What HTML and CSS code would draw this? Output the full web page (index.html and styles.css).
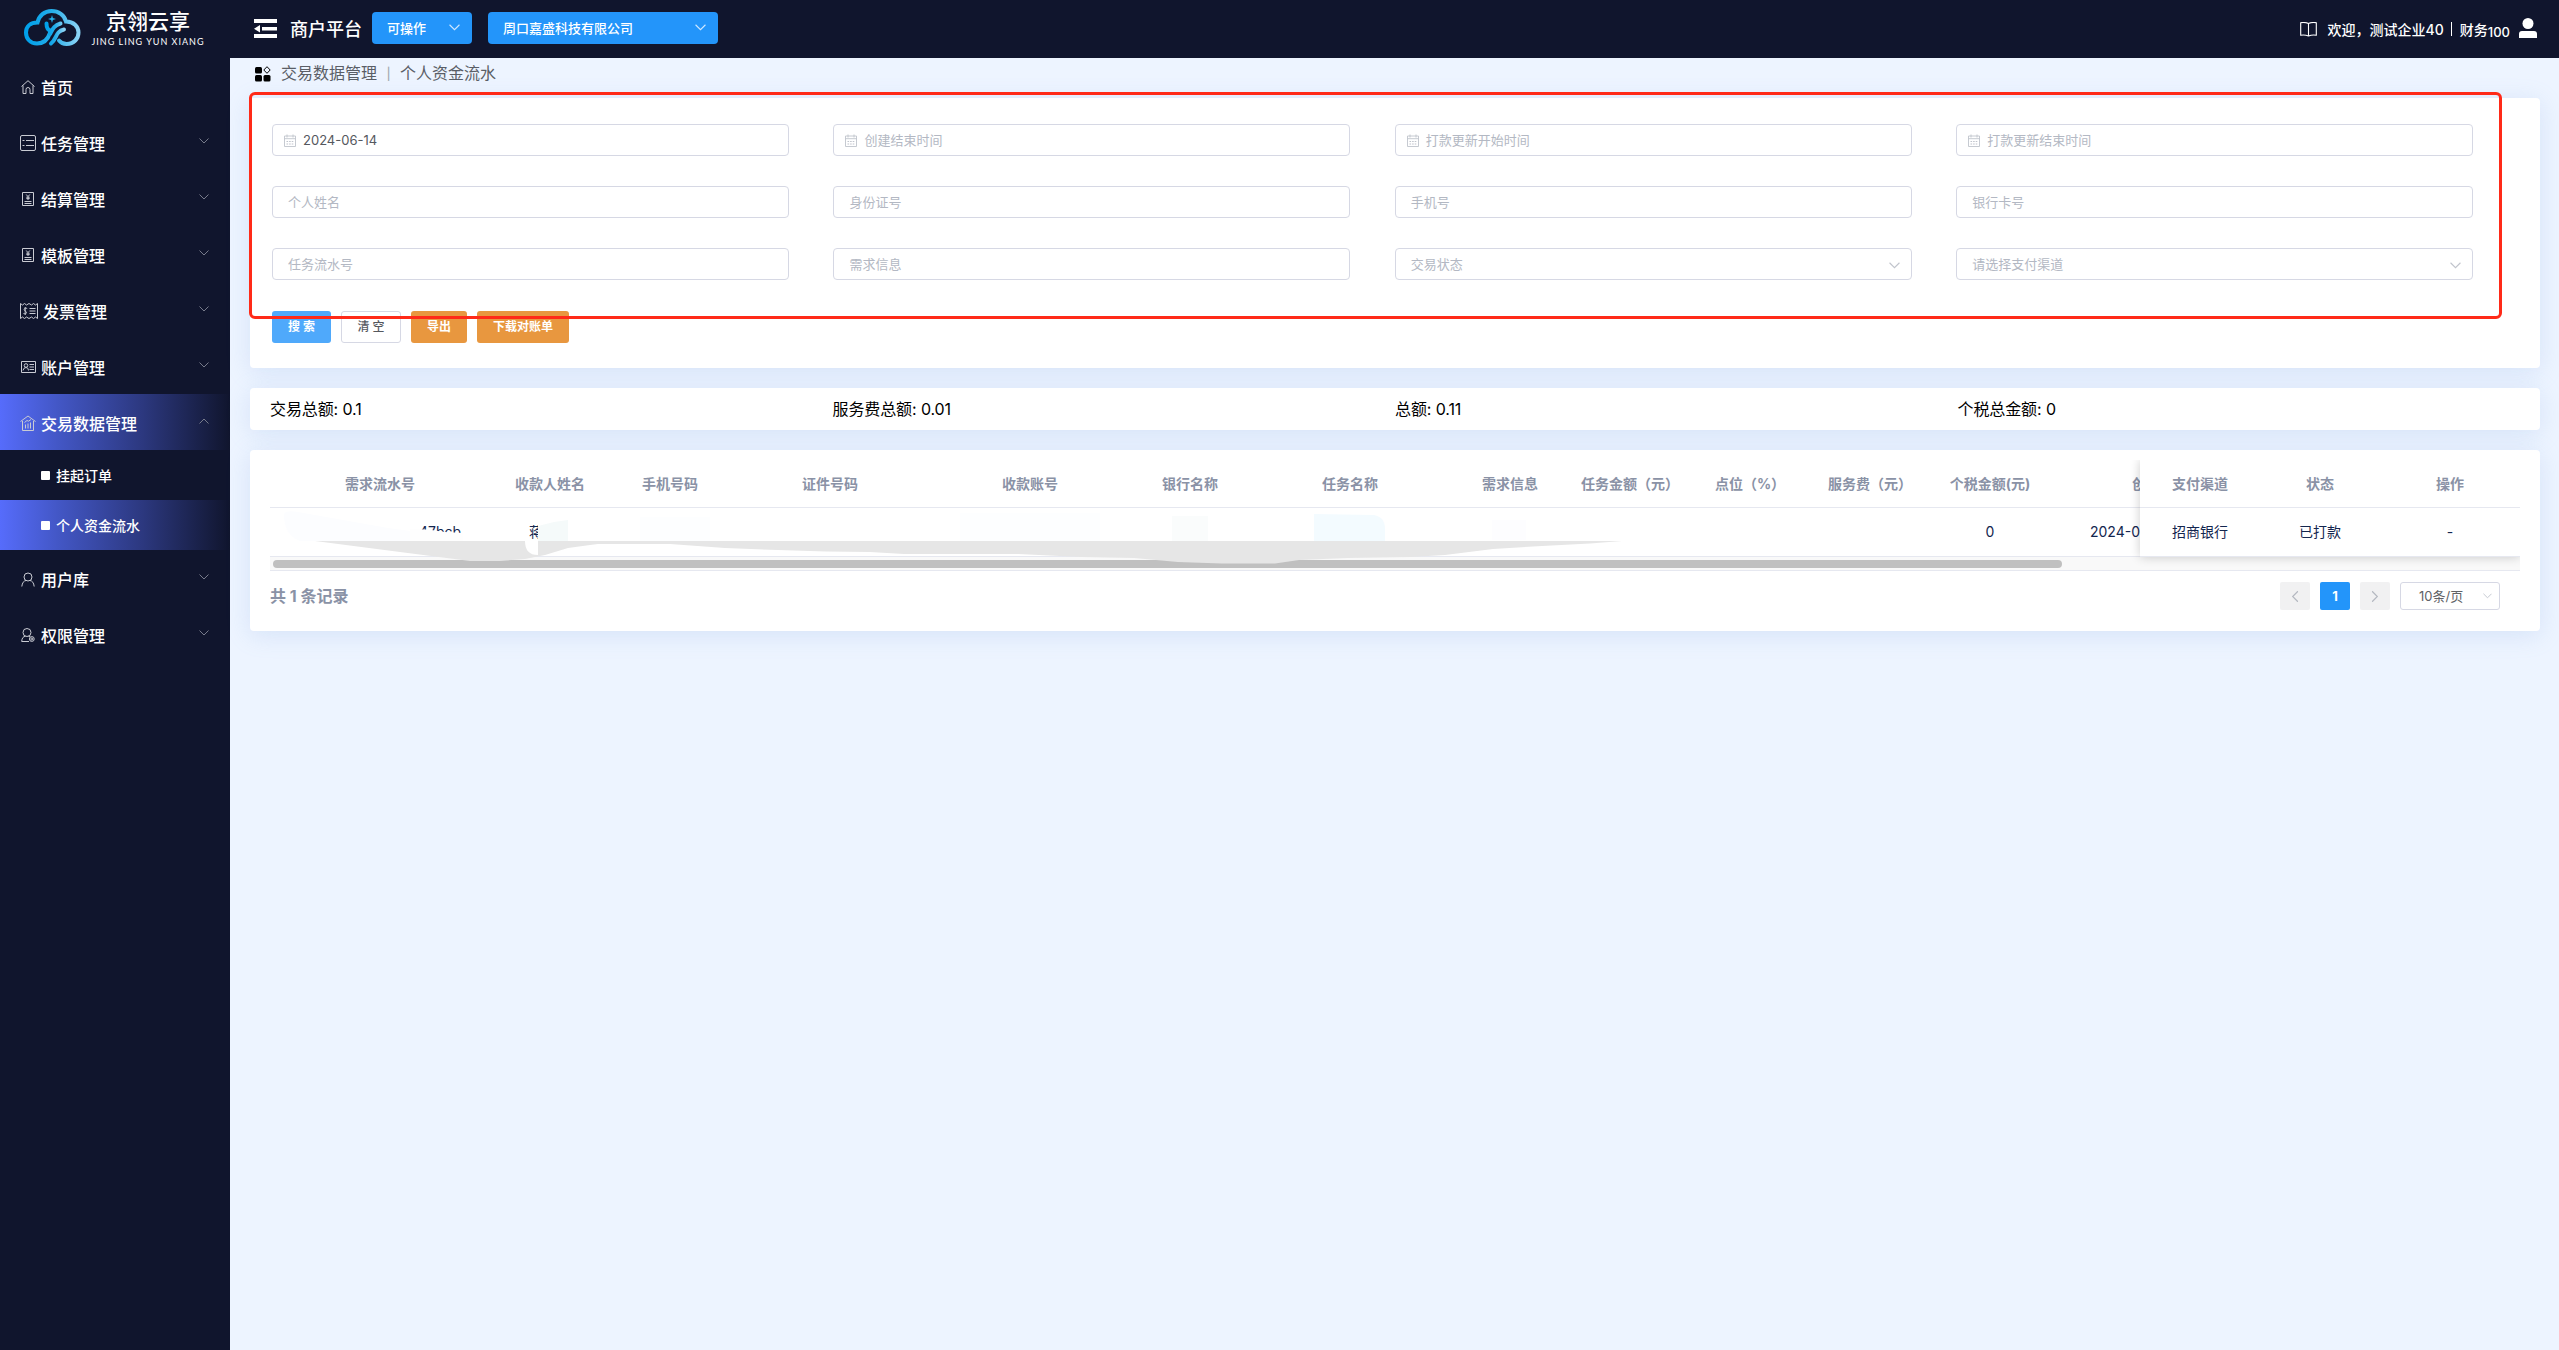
FILE: index.html
```
<!DOCTYPE html>
<html lang="zh-CN">
<head>
    <meta charset="UTF-8">
    <meta name="viewport" content="width=device-width, initial-scale=1.0">
    <title>商户平台 - 个人资金流水</title>
    <link rel="stylesheet" href="styles.css">
</head>
<body>
    <svg class="defs" width="0" height="0">
        <symbol id="arrow" viewBox="0 0 10 6"><path d="M.5.5 5 5 9.5.5" fill="none" stroke="currentColor"/></symbol>
        <symbol id="date" viewBox="0 0 12 13"><path d="M.5 2h11v10.500H.5zM.5 4.700h11M3 .5v3M9 .5v3" fill="none" stroke="currentColor" stroke-width=".9"/><path d="M2.500 7.500h7M2.500 10h7" stroke="currentColor" stroke-width="1.200" stroke-dasharray="1.600 1"/></symbol>
        <symbol id="bill" viewBox="0 0 12 14"><path d="M.5.5h11v13H.5zM2.500 9.500h7M2.500 11.500h7M4.200 2.500 6 4.600l1.800-2.100M6 4.600v3.400M4.300 5.200h3.400M4.300 6.600h3.400" fill="none" stroke="currentColor"/></symbol>
    </svg>

    <div class="container">
        <aside class="sidebar">
            <div class="logo">
                <svg class="logo-icon" width="58" height="39" viewBox="0 0 58 39">
                    <defs>
                        <linearGradient id="sky" x1="0" x2="1" y1="0" y2="0">
                            <stop offset="0" stop-color="#00a0ea"/>
                            <stop offset=".5" stop-color="#25aeea"/>
                            <stop offset="1" stop-color="#8bd3f5"/>
                        </linearGradient>
                    </defs>
                    <g fill="none" stroke="url(#sky)" stroke-width="4" stroke-linecap="round">
                        <path d="M27 25c-2 6-6 10.500-13 10.500C7 35.500 3 30.500 3 24.500c0-6 4.500-10 11.500-10C16 7.500 21.500 3 28.500 3S41.500 7 43 13.500c7.500 0 12.500 5 12.500 11S51 36 43.500 36c-3 0-5.500-1-7.500-3.500"/>
                        <path d="M23.500 15.500c0 4 1.500 7 4.500 7M37.500 15.500c-7 2-8 6-10.500 10.500M41 21.500c-9 2-7 9.500-13 14"/>
                    </g>
                    <path d="m29 7 .9 3.100L33 11l-3.100.9L29 15l-.9-3.100L25 11l3.100-.9z" fill="#25aeea"/>
                </svg>
                <div class="logo-text">
                    <div class="logo-cn">京翎云享</div>
                    <div class="logo-en">JING LING YUN XIANG</div>
                </div>
            </div>
            <ul class="menu">
                <li class="menu-item">
                    <svg width="14" height="14" viewBox="0 0 14 14"><path d="M.5 6.500 7 .7l6.500 5.800M2 5.500v8h3v-4a2 2 0 0 1 4 0v4h3v-8"/></svg>
                    <span>首页</span>
                </li>
                <li class="menu-item">
                    <svg width="16" height="16" viewBox="0 0 16 16"><path d="M2 .5h12q1.500 0 1.500 1.500v12q0 1.500-1.500 1.500H2Q.5 15.500.5 14V2Q.5.500 2 .500zM2.500 5.500h2M6 5.500h8M2.500 10.500h2M6 10.500h8"/></svg>
                    <span>任务管理</span>
                    <svg class="arrow" width="10" height="6"><use href="#arrow"/></svg>
                </li>
                <li class="menu-item">
                    <svg class="bill" width="12" height="14"><use href="#bill"/></svg>
                    <span>结算管理</span>
                    <svg class="arrow" width="10" height="6"><use href="#arrow"/></svg>
                </li>
                <li class="menu-item">
                    <svg class="bill" width="12" height="14"><use href="#bill"/></svg>
                    <span>模板管理</span>
                    <svg class="arrow" width="10" height="6"><use href="#arrow"/></svg>
                </li>
                <li class="menu-item">
                    <svg class="ticket" width="18" height="16" viewBox="0 0 18 16"><path d="M.5 15.500V.5l2 1.500 2-1.500 2 1.500L9 .5 11.500 2l2-1.500 2 1.500 2-1.500v15l-2-1.500-2 1.500-2-1.500L9 15.500 6.500 14l-2 1.500-2-1.500zM9.500 5.500h6M9.500 8h6M9.500 10.500h6M7.200 5.500c-3-1.500-4 1.500-2 2.500s2 3.500-1.700 2.500M5.200 4v8"/></svg>
                    <span>发票管理</span>
                    <svg class="arrow" width="10" height="6"><use href="#arrow"/></svg>
                </li>
                <li class="menu-item">
                    <svg width="15" height="12" viewBox="0 0 15 12"><path d="M.5.5h14v11H.500zM8.500 3.500H13M8.500 6H13M8.500 8.500H13M2 9.500q.500-3 3-3t2.500 3"/><circle cx="5" cy="4.500" r="1.800"/></svg>
                    <span>账户管理</span>
                    <svg class="arrow" width="10" height="6"><use href="#arrow"/></svg>
                </li>
                <li class="menu-item active">
                    <svg width="16" height="16" viewBox="0 0 16 16"><path d="M.5 6.500 8 1l7.500 5.500M2.500 6v9.500h11V6M5.500 13.500v-4M8 13.500v-5M10.500 13.500v-6M4.500 7.500 7 5.500l1.500.7L11 4.500"/></svg>
                    <span>交易数据管理</span>
                    <svg class="arrow up" width="10" height="6"><use href="#arrow"/></svg>
                </li>
                <li class="sub-item">挂起订单</li>
                <li class="sub-item active">个人资金流水</li>
                <li class="menu-item">
                    <svg width="14" height="15" viewBox="0 0 14 15"><circle cx="7" cy="5" r="4"/><path d="M.8 14.500Q1.500 9 5 8.500M13.200 14.500Q12.500 9 9 8.500"/></svg>
                    <span>用户库</span>
                    <svg class="arrow" width="10" height="6"><use href="#arrow"/></svg>
                </li>
                <li class="menu-item">
                    <svg width="14" height="15" viewBox="0 0 14 15"><circle cx="6" cy="4.500" r="4"/><path d="M8 13.500H.7Q1 8.500 4.500 8.300M7.500 8.300l1.500.5"/><circle cx="10.800" cy="11" r="2.400"/><circle cx="10.800" cy="11" r="1"/></svg>
                    <span>权限管理</span>
                    <svg class="arrow" width="10" height="6"><use href="#arrow"/></svg>
                </li>
            </ul>
        </aside>

        <div class="main">
            <header class="header">
                <svg class="fold" width="23" height="19" viewBox="0 0 23 19"><path d="M0 0h23v4H0zM8 8h15v3.500H8zM0 15h23v4H0zM0 9.700l6-3.700v7.500z" fill="#fff"/></svg>
                <h1>商户平台</h1>
                <div class="head-select mode">可操作<svg width="11" height="7"><use href="#arrow"/></svg></div>
                <div class="head-select company">周口嘉盛科技有限公司<svg width="11" height="7"><use href="#arrow"/></svg></div>
                <div class="user">
                    <svg class="book" width="17" height="15" viewBox="0 0 17 15"><path d="M8.500 1.500Q5 0 .7.700v12.500Q5 12.500 8.500 14q3.500-1.500 7.800-.8V.700Q12 0 8.500 1.500zV14" fill="none" stroke="#fff" stroke-width="1.100"/></svg>
                    <span class="welcome">欢迎，测试企业40</span>
                    <span class="line"></span>
                    <span class="role">财务<small>100</small></span>
                    <svg class="avatar" width="18" height="20" viewBox="0 0 18 20"><circle cx="9" cy="5.500" r="5.500" fill="#fff"/><path d="M0 20v-4q0-3 3-3h12q3 0 3 3v4z" fill="#fff"/></svg>
                </div>
            </header>

            <div class="content">
                <div class="breadcrumb">
                    <svg width="16" height="16" viewBox="0 0 16 16"><rect y="1" width="7" height="6.500" rx="1.500"/><rect y="9" width="7" height="6.500" rx="1.500"/><rect x="8.500" y="9" width="7" height="6.500" rx="1.500"/><path d="m12 .7 3.200 3.300L12 7.300 8.800 4z" fill="none" stroke="#000"/></svg>
                    <span>交易数据管理</span>
                    <i>|</i>
                    <span>个人资金流水</span>
                </div>

                <div class="card search">
                    <form class="filters">
                        <div class="field date filled"><svg width="12" height="13"><use href="#date"/></svg>2024-06-14</div>
                        <div class="field date"><svg width="12" height="13"><use href="#date"/></svg>创建结束时间</div>
                        <div class="field date"><svg width="12" height="13"><use href="#date"/></svg>打款更新开始时间</div>
                        <div class="field date"><svg width="12" height="13"><use href="#date"/></svg>打款更新结束时间</div>
                        <div class="field">个人姓名</div>
                        <div class="field">身份证号</div>
                        <div class="field">手机号</div>
                        <div class="field">银行卡号</div>
                        <div class="field">任务流水号</div>
                        <div class="field">需求信息</div>
                        <div class="field">交易状态<svg class="caret" width="11" height="7"><use href="#arrow"/></svg></div>
                        <div class="field">请选择支付渠道<svg class="caret" width="11" height="7"><use href="#arrow"/></svg></div>
                    </form>
                    <div class="buttons">
                        <button type="button" class="btn primary">搜 索</button>
                        <button type="button" class="btn plain">清 空</button>
                        <button type="button" class="btn warning export">导出</button>
                        <button type="button" class="btn warning download">下载对账单</button>
                    </div>
                    <div class="highlight"></div>
                </div>

                <div class="card summary">
                    <span>交易总额: 0.1</span>
                    <span>服务费总额: 0.01</span>
                    <span>总额: 0.11</span>
                    <span>个税总金额: 0</span>
                </div>

                <div class="card list">
                    <div class="table-wrap">
                        <div class="table-scroll">
                            <table class="table">
                                <colgroup>
                                    <col class="w220"><col class="w120"><col class="w120"><col class="w200"><col class="w200"><col class="w120"><col class="w200"><col class="w120"><col class="w120"><col class="w120"><col class="w120"><col class="w120"><col class="w220">
                                </colgroup>
                                <thead>
                                    <tr>
                                        <th>需求流水号</th>
                                        <th>收款人姓名</th>
                                        <th>手机号码</th>
                                        <th>证件号码</th>
                                        <th>收款账号</th>
                                        <th>银行名称</th>
                                        <th>任务名称</th>
                                        <th>需求信息</th>
                                        <th>任务金额（元）</th>
                                        <th>点位（%）</th>
                                        <th>服务费（元）</th>
                                        <th>个税金额(元)</th>
                                        <th class="created">创</th>
                                    </tr>
                                </thead>
                                <tbody>
                                    <tr>
                                        <td class="serial">47bcb</td>
                                        <td class="name">蒋</td>
                                        <td></td>
                                        <td></td>
                                        <td></td>
                                        <td></td>
                                        <td></td>
                                        <td></td>
                                        <td></td>
                                        <td></td>
                                        <td></td>
                                        <td>0</td>
                                        <td class="created">2024-06</td>
                                    </tr>
                                </tbody>
                            </table>
                        </div>
                        <div class="scrollbar"><div class="thumb"></div></div>
                        <!-- smudges over the private columns -->
                        <svg class="mask" width="1400" height="64" viewBox="270 507 1400 64">
                            <path d="M284 514q2-4 14-2l90 16 30 4v9H300q-16-6-16-27z" fill="#fcfdff"/>
                            <path d="M410 529.500h18l17 2.500 18 1v8h-53z" fill="#fefefe"/>
                            <path d="M538 520h14v21h-14z" fill="#fff"/>
                            <path d="M538 541V526l16-4 14-2v21z" fill="#f5fafa"/>
                            <path d="M640 517h70v24h-70zM960 513h140v28H960z" fill="#fdfeff"/>
                            <path d="M1172 516h36v25h-36z" fill="#fafcfc"/>
                            <path d="M1314 514l60 1q11 2 11 14v12h-71z" fill="#f3fbff"/>
                            <path d="M1492 520h34v20h-34z" fill="#fdfdff"/>
                            <path d="M315 541 400 552 470 561H500L525 559 545 555 568 548 590 545 598 544H670L725 548 778 550 826 551.500 870 552 904 554H1018L1081 557 1134 558 1178 562 1222 563.500H1275L1299 560 1348 558 1411 557 1445 555 1493 549 1542 546 1590 543.500 1622 541z" fill="#e6e6e6"/>
                            <path d="M525 541h13v14q-13 0-13-14z" fill="#fff"/>
                        </svg>
                        <table class="table fixed">
                            <colgroup><col class="w120"><col class="w120"><col class="w140"></colgroup>
                            <thead>
                                <tr><th>支付渠道</th><th>状态</th><th>操作</th></tr>
                            </thead>
                            <tbody>
                                <tr><td>招商银行</td><td>已打款</td><td>-</td></tr>
                            </tbody>
                        </table>
                    </div>
                    <div class="pagination">
                        <span class="total">共 1 条记录</span>
                        <span class="page"><svg class="prev" width="12" height="7"><use href="#arrow"/></svg></span>
                        <span class="page current">1</span>
                        <span class="page"><svg class="next" width="12" height="7"><use href="#arrow"/></svg></span>
                        <span class="size">10条/页<svg width="9" height="6"><use href="#arrow"/></svg></span>
                    </div>
                </div>
            </div>
        </div>
    </div>
</body>
</html>
```
FILE: styles.css
```
* {
    box-sizing: border-box;
}

body {
    margin: 0;
    font-family: Inter, "Noto Sans CJK SC", sans-serif;
    font-size: 14px;
    background-color: #edf4ff;
}

.defs {
    display: none;
}

.container {
    display: flex;
    height: 1350px;
    overflow: hidden;
}

/* sidebar */
.sidebar {
    flex: none;
    width: 230px;
    background-color: #10152d;
    color: #fff;
}

.logo {
    display: flex;
    height: 58px;
    padding: 8px 0 0 23px;
}

.logo-text {
    width: 114px;
    margin-left: 10px;
    text-align: center;
    white-space: nowrap;
}

.logo-cn {
    height: 28px;
    margin-top: 1px;
    font-size: 21px;
    font-weight: 500;
    line-height: 25px;
}

.logo-en {
    font-family: Lato, sans-serif;
    font-size: 9px;
    line-height: 10px;
    letter-spacing: 1px;
}

.menu {
    margin: 0;
    padding: 0;
    list-style: none;
}

.menu-item {
    display: flex;
    align-items: center;
    height: 56px;
    padding: 2px 21px 0 20px;
    font-size: 16px;
    font-weight: 500;
}

.menu-item svg {
    flex: none;
    margin-left: 1px;
    fill: none;
    stroke: #c9cbd3;
    stroke-width: 1;
}

.menu-item span {
    margin-left: 6px;
}

.menu-item svg[width="16"] {
    margin: 0 -1px 0 0;
}

.menu-item svg[width="15"] {
    margin-right: -1px;
}

.menu-item .bill {
    margin: 0 1px 0 2px;
    stroke: none;
    color: #c9cbd3;
}

.menu-item .ticket {
    margin: 0 -1px 0 0;
}

.menu-item .arrow {
    margin: -5px 0 0 auto;
    color: #777b8b;
    stroke: none;
}

.menu-item .arrow.up {
    transform: rotate(180deg);
}

.sub-item {
    display: flex;
    align-items: center;
    height: 50px;
    padding-left: 41px;
    font-weight: 500;
}

.sub-item::before {
    content: "";
    width: 9px;
    height: 9px;
    margin-right: 6px;
    border-radius: 1px;
    background-color: #fff;
}

.menu .active {
    background: linear-gradient(90deg, #566cfb 0%, #4357c6 25%, #2c387f 62%, #10152d 100%);
}

/* header */
.main {
    flex: 1;
    min-width: 0;
}

.header {
    display: flex;
    align-items: center;
    height: 58px;
    padding-left: 24px;
    background-color: #10152d;
    color: #fff;
}

.fold {
    margin-top: -2px;
}

.header h1 {
    width: 82px;
    margin: -2px 0 0 13px;
    font-size: 18px;
    font-weight: 500;
}

.head-select {
    display: flex;
    align-items: center;
    justify-content: space-between;
    height: 32px;
    margin-top: -2px;
    padding: 0 12px 1px 15px;
    border-radius: 4px;
    background-color: #2395fa;
    font-size: 13px;
    font-weight: 500;
}

.head-select svg {
    color: #cfe8ff;
}

.mode {
    width: 100px;
}

.company {
    width: 230px;
    margin-left: 16px;
}

.user {
    display: flex;
    align-items: center;
    margin-left: auto;
    padding-right: 22px;
    font-weight: 500;
    white-space: nowrap;
}

.welcome {
    margin-left: 11px;
}

.line {
    width: 1px;
    height: 14px;
    margin: 0 8px 0 7px;
    background-color: #fff;
}

.role {
    margin-right: 9px;
}

.role small {
    position: relative;
    top: 2px;
    font-size: 13px;
}

.avatar {
    margin-top: -2px;
}

/* content */
.content {
    padding: 0 19px 0 20px;
}

.breadcrumb {
    display: flex;
    align-items: center;
    height: 40px;
    padding: 0 0 12px 5px;
    color: #5a5e66;
    font-size: 16px;
}

.breadcrumb svg {
    margin: 3px 10px 0 0;
}

.breadcrumb i {
    width: 23px;
    margin-top: 2px;
    color: #a4a8b0;
    font-size: 12px;
    font-style: normal;
    font-weight: 500;
    text-align: center;
}

.card {
    position: relative;
    border-radius: 4px;
    background-color: #fff;
    box-shadow: 0 4px 24px rgba(120, 160, 220, 0.2);
}

.search {
    height: 270px;
    padding: 26px 67px 0 22px;
}

.filters {
    display: grid;
    grid-template-columns: repeat(4, 1fr);
    gap: 30px 44.5px;
}

.field {
    display: flex;
    align-items: center;
    height: 32px;
    padding: 0 15px 2px;
    border: 1px solid #d6d8e4;
    border-radius: 4px;
    color: #b3b8c3;
    font-size: 13px;
}

.date {
    padding-left: 11px;
}

.date svg {
    margin: 2px 7px 0 0;
    color: #c0c4cc;
}

.filled {
    padding-bottom: 0;
    color: #55585e;
}

.filled svg {
    margin-top: 0;
}

.caret {
    margin: 4px -4px 0 auto;
    color: #c0c4cc;
}

.buttons {
    display: flex;
    gap: 10px;
    margin-top: 31px;
}

.btn {
    height: 32px;
    padding: 0 0 3px;
    border: none;
    border-radius: 3px;
    color: #fff;
    font-family: inherit;
    font-size: 12px;
    font-weight: 700;
}

.primary {
    width: 59px;
    background-color: #4fa9fb;
}

.plain {
    width: 60px;
    border: 1px solid #d6d8e4;
    background-color: #fff;
    color: #55585e;
    font-weight: 500;
}

.warning {
    background-color: #e8973f;
}

.export {
    width: 56px;
}

.download {
    width: 92px;
}

.highlight {
    position: absolute;
    top: -6px;
    left: -1px;
    right: 38px;
    height: 227px;
    border: 3px solid #ff2a18;
    border-radius: 6px;
}

.summary {
    display: grid;
    grid-template-columns: repeat(4, 1fr);
    align-items: center;
    height: 42px;
    margin-top: 20px;
    padding: 0 20px 2px;
    font-size: 16px;
    letter-spacing: -0.1px;
}

.list {
    height: 181px;
    margin-top: 20px;
    padding: 10px 20px 0;
}

.table-wrap {
    position: relative;
    height: 111px;
    overflow: hidden;
}

.table-scroll {
    overflow: hidden;
}

.table {
    width: 2000px;
    table-layout: fixed;
    border-collapse: separate;
    border-spacing: 0;
    background-color: #fff;
}

.table th,
.table td {
    height: 48px;
    padding: 0 0 2px;
    border-bottom: 1px solid #e6e8f0;
    color: #8a92a6;
    font-weight: 700;
    text-align: center;
    white-space: nowrap;
}

.table td {
    height: 49px;
    color: #13264f;
    font-weight: 400;
}

.table .serial {
    padding-left: 120px;
}

.table .name {
    padding-right: 28px;
}

.table .created {
    padding-left: 40px;
    text-align: left;
}

.table th.created {
    padding-left: 82px;
}

.w120 { width: 120px; }
.w140 { width: 140px; }
.w200 { width: 200px; }
.w220 { width: 220px; }

.fixed {
    position: absolute;
    top: 0;
    right: 0;
    width: 380px;
    box-shadow: 0 0 10px rgba(0, 0, 0, 0.2);
}

.scrollbar {
    height: 14px;
    padding: 3px;
    border-bottom: 1px solid #e6e8f0;
    background-color: #f9f9f9;
}

.thumb {
    width: 1789px;
    height: 8px;
    border-radius: 4px;
    background-color: #c0c0c0;
}

.mask {
    position: absolute;
    top: 47px;
    left: 0;
}

.pagination {
    display: flex;
    align-items: center;
    gap: 10px;
    height: 28px;
    margin-top: 11px;
    padding-right: 20px;
}

.total {
    margin: -2px auto 0 0;
    color: #8a92a6;
    font-size: 16px;
    font-weight: 700;
}

.page {
    display: flex;
    align-items: center;
    justify-content: center;
    width: 30px;
    height: 28px;
    border-radius: 2px;
    background-color: #f1f1f2;
    color: #b4b8c0;
}

.current {
    background-color: #2395fa;
    color: #fff;
    font-size: 13px;
    font-weight: 700;
}

.prev {
    transform: rotate(90deg);
}

.next {
    transform: rotate(-90deg);
}

.size {
    display: flex;
    align-items: center;
    justify-content: space-between;
    width: 100px;
    height: 28px;
    padding: 0 7px 1px 18px;
    border: 1px solid #d6d8e4;
    border-radius: 3px;
    color: #606266;
    font-size: 13px;
}

.size svg {
    color: #c0c4cc;
}
```
